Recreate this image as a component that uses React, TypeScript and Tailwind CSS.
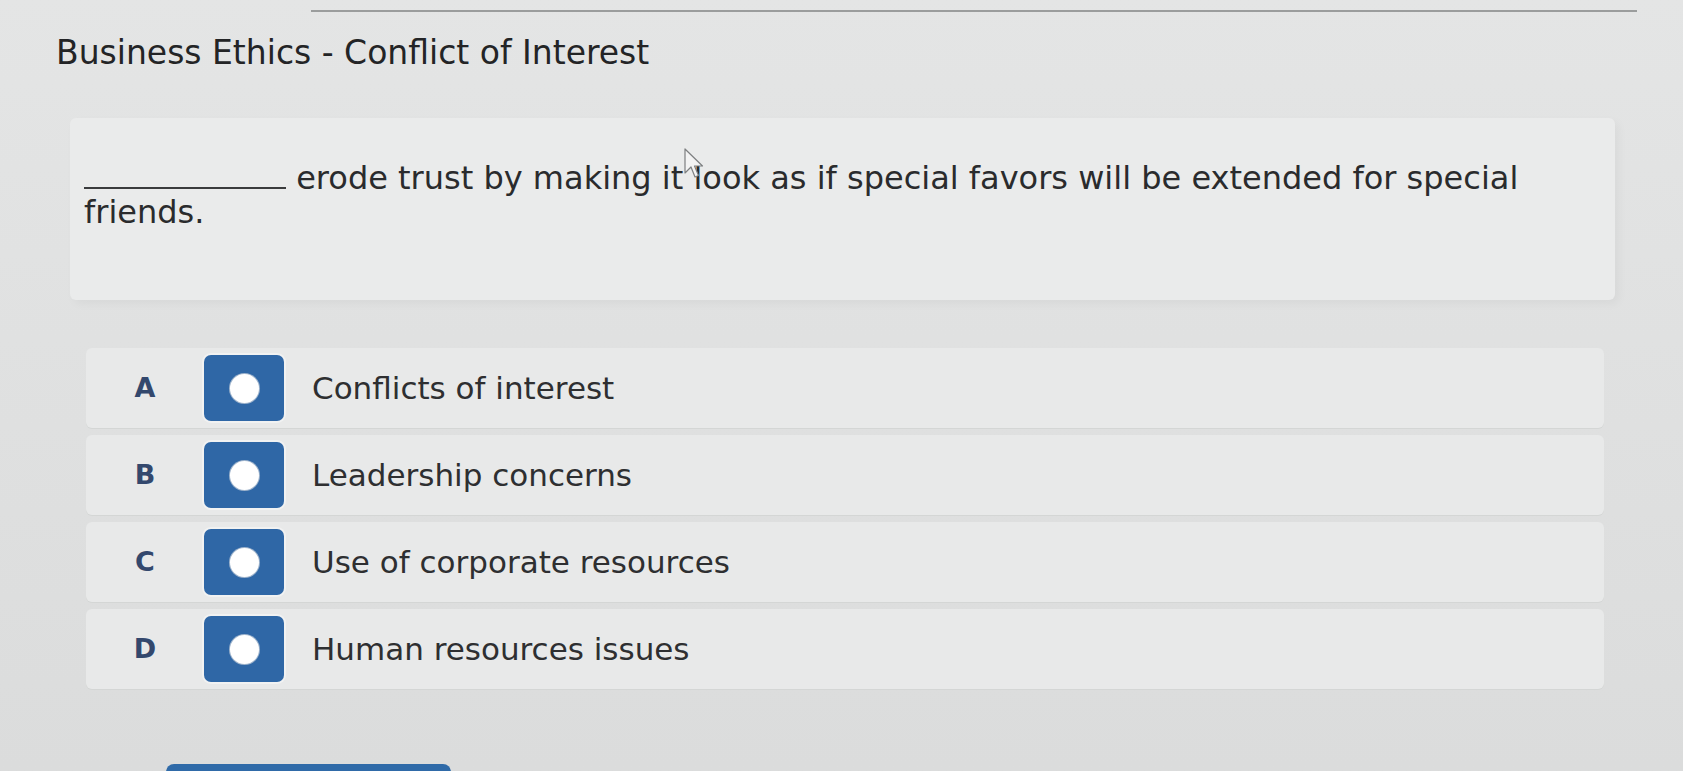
import React from "react";

const OPTIONS = [
  { letter: "A", text: "Conflicts of interest" },
  { letter: "B", text: "Leadership concerns" },
  { letter: "C", text: "Use of corporate resources" },
  { letter: "D", text: "Human resources issues" },
];

function RadioTile() {
  return (
    <div className="flex h-[66px] w-[80px] items-center justify-center rounded-[7px] bg-[#2f67a6] ring-2 ring-[#f1f2f2]">
      <div className="h-[29px] w-[29px] rounded-full bg-white ring-1 ring-[#9fb4cc]" />
    </div>
  );
}

function Cursor() {
  return (
    <svg
      className="absolute left-[684px] top-[148px]"
      width="22"
      height="32"
      viewBox="0 0 22 32"
    >
      <path
        d="M1 1 L1 25 L7 19 L11 29 L14.5 27.5 L10.5 18 L18.5 18 Z"
        fill="#f3f3f3"
        stroke="#7d7f80"
        strokeWidth="1.2"
        strokeLinejoin="round"
      />
    </svg>
  );
}

export default function App() {
  return (
    <div
      className="relative h-[771px] w-full overflow-hidden bg-linear-to-b from-[#e4e5e5] to-[#dbdcdc] text-[#2a2b2d]"
      style={{ fontFamily: '"DejaVu Sans", Verdana, sans-serif' }}
    >
      <div className="ml-[311px] mr-[46px] mt-[10px] h-[2px] bg-[#9b9d9d]" />

      <h1 className="ml-[56px] mt-[21px] text-[33px] font-normal leading-[40px] text-[#232426]">
        Business Ethics - Conflict of Interest
      </h1>

      <div className="ml-[70px] mt-[45px] h-[182px] w-[1545px] rounded-md bg-[#eaebeb] px-[14px] pt-[43px] shadow-[4px_4px_10px_rgba(0,0,0,0.04)]">
        <p className="text-[32px] leading-[34px]">
          <span className="inline-block w-[202px] border-b-2 border-[#3a3b3d] align-baseline" />{" "}
          erode trust by making it look as if special favors will be extended for special
          <br />
          friends.
        </p>
      </div>

      <div className="ml-[86px] mt-[48px] flex w-[1518px] flex-col gap-[7px]">
        {OPTIONS.map((o) => (
          <div
            key={o.letter}
            className="flex h-[80px] items-center rounded-md bg-[#e8e9e9] pl-[46px] shadow-[0_1px_0_#d4d6d5]"
          >
            <span className="w-[26px] text-center text-[27px] font-bold text-[#33486d]">
              {o.letter}
            </span>
            <div className="ml-[46px]">
              <RadioTile />
            </div>
            <span className="ml-[28px] text-[31px] leading-[40px] text-[#2e2f31]">
              {o.text}
            </span>
          </div>
        ))}
      </div>

      <div className="ml-[166px] mt-[75px] h-[50px] w-[285px] rounded-t-lg bg-[#2f6aa8]" />

      <Cursor />
    </div>
  );
}
